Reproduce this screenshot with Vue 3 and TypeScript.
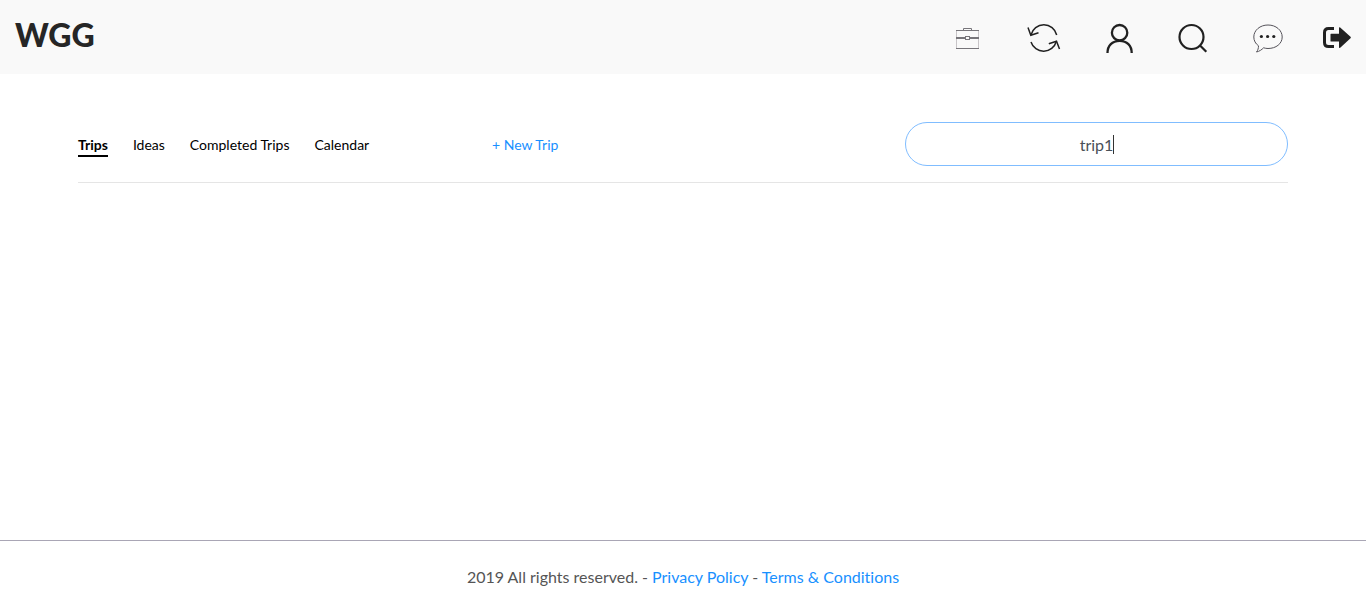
<script setup lang="ts">
import { ref } from 'vue'

const tabs: string[] = ['Trips', 'Ideas', 'Completed Trips', 'Calendar']
const activeTab = ref<string>('Trips')
const query = ref<string>('trip1')
</script>

<template>
  <div class="page">
    <header class="topbar">
      <a class="brand" href="#">WGG</a>
      <nav class="actions" aria-label="Main">
        <a href="#" aria-label="Trips">
          <svg width="36" height="40" viewBox="0 0 36 40" fill="none">
            <path d="M3.5 12.5V30.5M25.5 12.5V30.5" stroke="#c8c5c8" />
            <path d="M3 12.5H26M3 30.5H26M10.500 12V10.500H18.500V12" stroke="#77757a" />
            <path d="M3 20H12M17 20H26" stroke="#77757a" stroke-width="2" />
            <rect x="12.500" y="18.500" width="4" height="3" stroke="#77757a" />
          </svg>
        </a>
        <a href="#" aria-label="Refresh">
          <svg width="36" height="40" viewBox="0 0 36 40" fill="none" stroke="#212121" stroke-width="1.500">
            <path d="M4 17A13.200 13.200 0 0 1 29.700 17M4 24A13.200 13.200 0 0 0 29.300 23.500" />
            <path d="M1 9.500L3.800 17.300L11.500 14.800M32.500 31L29.500 23.200L21.800 25.800" />
          </svg>
        </a>
        <a href="#" aria-label="Profile">
          <svg width="36" height="40" viewBox="0 0 36 40" fill="none" stroke="#212121" stroke-width="2.300">
            <circle cx="18.600" cy="14.700" r="7.700" />
            <path d="M6.500 35C6.500 27.500 11.300 22.800 18.600 22.800S30.700 27.500 30.700 35" />
          </svg>
        </a>
        <a href="#" aria-label="Search">
          <svg width="36" height="40" viewBox="0 0 36 40" fill="none" stroke="#212121" stroke-width="2.200">
            <circle cx="16.500" cy="19" r="12" />
            <path d="M25 27.500L31.300 33.800" />
          </svg>
        </a>
        <a href="#" aria-label="Messages">
          <svg width="36" height="40" viewBox="0 0 36 40" fill="none">
            <path d="M9.500 27.800C6.500 25.700 4.800 22.500 4.800 19C4.800 12.300 11 7 19 7S33.200 12.300 33.200 19S27 30.500 19 30.500C17.500 30.500 16 30.200 14.600 29.800C12.700 31.700 10.500 33.300 7.500 34C9 32.300 9.500 30 9.500 27.800Z" stroke="#55535a" />
            <g fill="#212121">
              <circle cx="12.400" cy="18.500" r="1.600" />
              <circle cx="18.600" cy="18.500" r="1.600" />
              <circle cx="24.800" cy="18.500" r="1.600" />
            </g>
          </svg>
        </a>
        <a href="#" aria-label="Log out">
          <svg width="28" height="40" viewBox="0 0 28 40" fill="none">
            <path d="M11 10.500H5.500Q1.500 10.500 1.500 14.500V24.500Q1.500 28.500 5.500 28.500H11" stroke="#212121" stroke-width="3" />
            <path d="M8 15.700H16V10Q16 8.600 17.200 9.500L27.500 18.800Q28.200 19.500 27.500 20.200L17.200 29.700Q16 30.500 16 29V23.500H8Q7.500 23.500 7.500 23V16.200Q7.500 15.700 8 15.700Z" fill="#212121" />
          </svg>
        </a>
      </nav>
    </header>

    <main class="content">
      <div class="toolbar">
        <nav class="tabs" aria-label="Trip views">
          <button
            v-for="tab in tabs"
            :key="tab"
            type="button"
            class="tab"
            :class="{ active: tab === activeTab }"
            @click="activeTab = tab"
          >{{ tab }}</button>
        </nav>
        <a class="new-trip" href="#">+ New Trip</a>
        <div class="search">
          <input v-model="query" type="text" aria-label="Search trips" />
          <div class="caret-layer" aria-hidden="true"><span class="caret">{{ query }}</span></div>
        </div>
      </div>
    </main>

    <footer class="footer">
      2019 All rights reserved. - <a href="#">Privacy Policy</a> - <a href="#">Terms &amp; Conditions</a>
    </footer>
  </div>
</template>

<style>
body {
  margin: 0;
  background: #fff;
}
</style>

<style scoped>
.page {
  display: flex;
  flex-direction: column;
  min-height: 100vh;
  font-family: Lato, "Liberation Sans", sans-serif;
  font-size: 16px;
  line-height: 24px;
  font-variant-ligatures: none;
  color: #555;
}
a {
  color: #1890ff;
  text-decoration: none;
}
.topbar {
  display: flex;
  justify-content: space-between;
  align-items: flex-start;
  box-sizing: border-box;
  min-height: 74px;
  padding: 0 15px;
  background: #f9f9f9;
}
.brand {
  padding-top: 14px;
  font-size: 32px;
  line-height: 42px;
  font-weight: 900;
  color: #262626;
}
.actions {
  display: flex;
  gap: 38px;
  padding-top: 18px;
}
.actions a,
.actions svg {
  display: block;
}
.content {
  flex: 1;
  padding: 48px 78px 0;
}
.toolbar {
  display: grid;
  grid-template-columns: 414px 1fr 383px;
  align-items: center;
  padding-bottom: 16px;
  border-bottom: 1px solid #e5e5e5;
}
.tabs {
  display: flex;
  gap: 25px;
}
.tab {
  padding: 4px 0 0;
  border: 0;
  border-bottom: 2px solid transparent;
  background: none;
  font-family: inherit;
  font-size: 14px;
  line-height: 20px;
  color: #000;
  white-space: nowrap;
  cursor: pointer;
}
.tab.active {
  border-bottom-color: #000;
  font-weight: 700;
}
.new-trip {
  padding-top: 2px;
  font-size: 14px;
  line-height: 20px;
}
.search {
  position: relative;
}
.search input {
  display: block;
  box-sizing: border-box;
  width: 100%;
  height: 44px;
  padding: 0 16px;
  border: 1px solid #80bdff;
  border-radius: 22px;
  outline: 0;
  background: #fff;
  font-family: inherit;
  font-size: 16px;
  text-align: center;
  color: #495057;
  caret-color: transparent;
}
.caret-layer {
  position: absolute;
  inset: 0;
  display: flex;
  align-items: center;
  justify-content: center;
  pointer-events: none;
}
.caret {
  border-right: 1px solid #333;
  line-height: 19px;
  color: transparent;
}
.footer {
  padding: 24px 16px;
  border-top: 1px solid #a9a6b5;
  text-align: center;
}
</style>
